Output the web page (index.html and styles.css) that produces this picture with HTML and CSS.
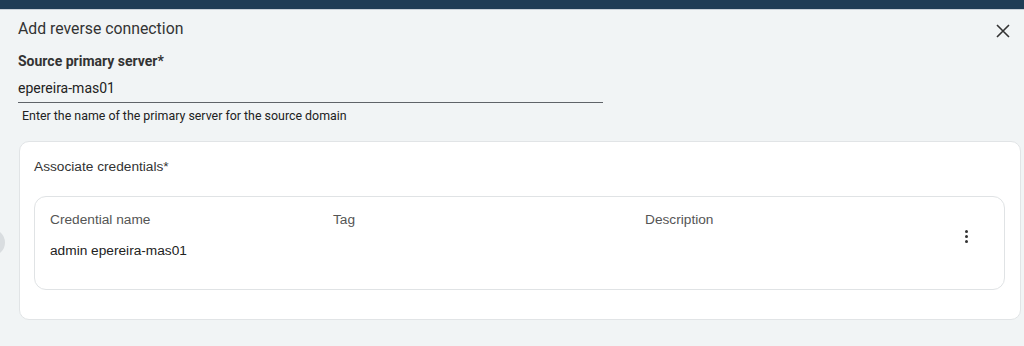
FILE: index.html
```html
<!DOCTYPE html>
<html>
<head>
  <title>Add reverse connection</title>
  <link rel="stylesheet" href="styles.css">
</head>
<body>
  <div class="topbar"></div>
  <div class="side-knob"></div>
  <div class="dialog">
    <div class="dialog-header">
      <h1>Add reverse connection</h1>
      <button class="close-btn" aria-label="Close">
        <svg width="14" height="14" viewBox="0 0 14 14"><path d="M1 1L13 13M13 1L1 13" stroke="#333" stroke-width="1.6" fill="none"/></svg>
      </button>
    </div>

    <div class="field">
      <label for="server">Source primary server*</label>
      <div class="input-line">epereira-mas01</div>
      <div class="hint">Enter the name of the primary server for the source domain</div>
    </div>

    <div class="card">
      <div class="card-title">Associate credentials*</div>
      <div class="cred">
        <div class="cred-cols">
          <div class="col col-name">
            <div class="col-head">Credential name</div>
            <div class="col-value">admin epereira-mas01</div>
          </div>
          <div class="col col-tag">
            <div class="col-head">Tag</div>
          </div>
          <div class="col col-desc">
            <div class="col-head">Description</div>
          </div>
        </div>
        <button class="kebab" aria-label="More">
          <span></span><span></span><span></span>
        </button>
      </div>
    </div>
  </div>
</body>
</html>
```

FILE: styles.css
```css
body {
  margin: 0;
  background-color: #f1f4f5;
  font-family: Roboto, "Liberation Sans", Arial, sans-serif;
  color: #333;
  height: 346px;
  overflow: hidden;
  position: relative;
}
.topbar {
  height: 9px;
  background-color: #1f3d56;
  border-bottom: 1px solid #c9d1d8;
}
.side-knob {
  position: absolute;
  left: -22px;
  top: 229px;
  width: 27px;
  height: 27px;
  border-radius: 50%;
  background-color: #d9dde0;
}
.dialog {
  padding: 0 3px 0 18px;
}
.dialog-header {
  display: flex;
  justify-content: space-between;
  align-items: center;
  height: 38px;
}
.dialog-header h1 {
  margin: 0;
  font-size: 15.8px;
  font-weight: 400;
  color: #333;
  padding-bottom: 1px;
}
.close-btn {
  background: none;
  border: none;
  padding: 0;
  margin-right: 11px;
  margin-top: 4px;
  width: 14px;
  height: 14px;
  cursor: pointer;
}
.field {
  width: 585px;
}
.field label {
  display: block;
  font-size: 14px;
  font-weight: 700;
  color: #333;
  margin-top: 4px;
  line-height: 18px;
}
.input-line {
  font-size: 14px;
  color: #222;
  padding: 10px 0 6px;
  border-bottom: 1px solid #5f6368;
  line-height: 16px;
}
.hint {
  font-size: 12.4px;
  color: #222;
  padding: 5px 0 0 4px;
  line-height: 15px;
}
.card {
  margin-top: 18px;
  margin-left: 1px;
  background-color: #fff;
  border: 1px solid #e1e4e6;
  border-radius: 10px;
  padding: 17px 15px 29px 14px;
  font-family: "Liberation Sans", Arial, sans-serif;
}
.card-title {
  font-size: 13.7px;
  color: #333;
  line-height: 16px;
}
.cred {
  margin-top: 21px;
  border: 1px solid #e0e3e5;
  border-radius: 12px;
  height: 92px;
  display: flex;
  position: relative;
}
.cred-cols {
  display: grid;
  grid-template-columns: 283px 312px 1fr;
  flex: 1;
  padding: 15px 0 0 15px;
}
.col-head {
  font-size: 13.7px;
  color: #555;
  line-height: 15px;
}
.col-value {
  font-size: 13.7px;
  color: #222;
  margin-top: 16px;
  line-height: 15px;
}
.kebab {
  background: none;
  border: none;
  padding: 0;
  width: 4px;
  margin: 33px 35px 0 0;
  display: flex;
  flex-direction: column;
  gap: 2px;
  align-self: flex-start;
  cursor: pointer;
}
.kebab span {
  width: 3px;
  height: 3px;
  border-radius: 50%;
  background-color: #333;
}
```
